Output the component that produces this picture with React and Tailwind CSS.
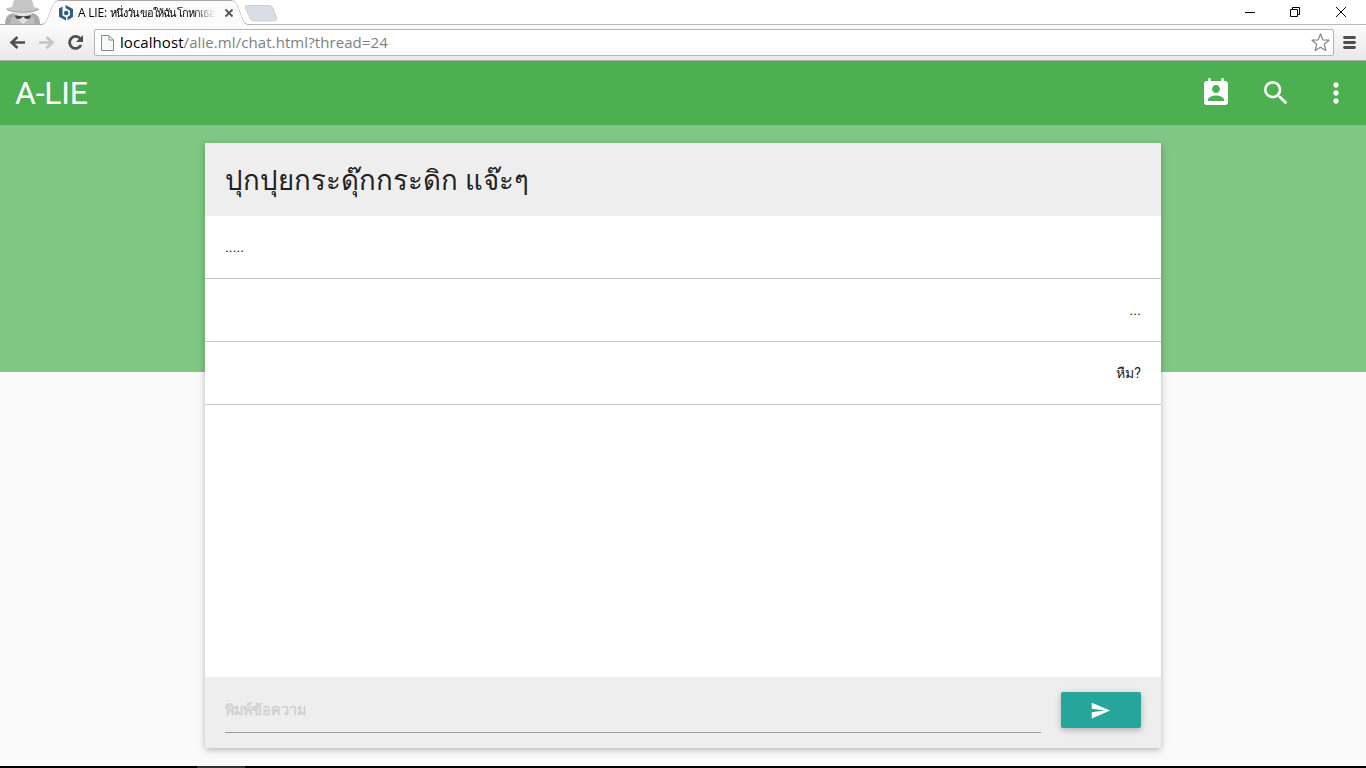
import { MdPermContactCalendar, MdSearch, MdMoreVert, MdSend } from "react-icons/md";

function TabStrip() {
  return (
    <div className="relative flex h-6 shrink-0 bg-white">
      <svg className="absolute left-0 top-0" width="290" height="25" viewBox="0 0 290 25">
        <g>
          <path d="M5 24C5 17 8 14 14 13H32C37 14 40 17 40 24Z" fill="#a9a9a9" />
          <path d="M14 11H32L31 19L23 24L15 19Z" fill="#e2e2e2" />
          <path d="M12 17L16 16L22 24H10ZM34 17L30 16L24 24H35Z" fill="#bdbdbd" />
          <path d="M14 0H32L34 7L39 8.500C39 11 31 12.500 23 12.500C14 12.500 6 11 6 8.500L12 7Z" fill="#c6c6c6" />
          <path d="M7 9.500C14 13 31 13 39 9.500" fill="none" stroke="#a5a5a5" />
          <path d="M15 15Q23 17.500 31 15Q31 19 27 19Q24.500 18.800 24 17H22.500Q21.500 19 18.500 19Q15 18.800 15 15Z" fill="#444" />
        </g>
        <path d="M0 24.500H40C46 24 46 22 48 18L53 5Q55 .5 59 .5H231Q235 .5 237 5L242 18C244 23 245 24 250 25H0Z" fill="none" stroke="#a8a8a8" />
        <path d="M42 25C46 24 46 22 48 18L53 5Q55 1 59 1H231Q235 1 237 5L242 18C244 23 245 24 248 25Z" fill="#fbfbfb" />
        <path d="M246.500 5.500H269Q272 5.500 273 8L276.500 18Q277.500 21 274 21H254Q251 21 250 18L245.500 8Q244.500 5.500 246.500 5.500Z" fill="#d8dee6" stroke="#ccd0d6" />
        <path d="M59 8.500L62.500 6.500V15.500L66 17.500V20.500L59 16.700ZM65.500 5L73 9V17L67.500 20.200V17L70 15.300V10.700L65.500 8Z" fill="#2f5d84" />
        <circle cx="66.200" cy="13" r="2.300" fill="#2f5d84" />
        <path d="M225.500 9.500L232.500 16.500M232.500 9.500L225.500 16.500" stroke="#555" strokeWidth="1.800" />
      </svg>
      <div className="relative ml-[78px] mt-[4px] h-[20px] w-[140px] whitespace-nowrap bg-linear-to-r from-black from-82% to-transparent to-98% bg-clip-text font-['Open_Sans','Noto_Sans',sans-serif] text-[12px] leading-[18px] text-transparent">
        <span className="tracking-[-0.2px]">A LIE: </span>
        <span className="text-[11px] tracking-[-0.85px]">หนึ่งวันขอให้ฉันโกหกเธอ</span>
      </div>
      <svg className="ml-auto shrink-0" width="130" height="24" viewBox="1236 0 130 24" fill="none" stroke="#000">
        <path d="M1245 12.500H1255M1290.500 9.500H1297.500V16.500H1290.500ZM1292.500 9V7.500H1299.500V14.500H1298M1336 7L1346 17M1346 7L1336 17" />
      </svg>
    </div>
  );
}

function Toolbar() {
  return (
    <div className="flex h-[37px] shrink-0 items-center border-t border-b border-t-[#b8b8b8] border-b-[#b0b0b0] bg-linear-to-b from-[#fbfbfb] to-[#e9e9e9]">
      <svg width="94" height="35" viewBox="0 25 94 35" fill="none" strokeWidth="2.600">
        <path d="M25 42.500H12M17.500 37L11.500 42.500L17.500 48" stroke="#505050" />
        <path d="M39 42.500H52M46.500 37L52.500 42.500L46.500 48" stroke="#c4c4c4" />
        <path d="M80.500 39A6 6 0 1 0 81 45" stroke="#505050" strokeWidth="2.800" />
        <path d="M83 35V42H76Z" fill="#505050" />
      </svg>
      <div className="flex h-[27px] w-[1240px] items-center rounded-[2px] border border-[#b4b4b4] bg-white">
        <svg className="ml-[6px] shrink-0" width="13" height="16" viewBox="0 0 13 16" fill="#f8f8f8" stroke="#888">
          <path d="M.5 .5H8L12.500 5V15.500H.5ZM8 .5V5H12.500" />
        </svg>
        <div className="mb-[2px] ml-[6px] grow font-['Open_Sans',sans-serif] text-[15px] leading-[24px] tracking-[0.08px] text-[#808080]">
          <span className="text-black">localhost</span>/alie.ml/chat.html?thread=24
        </div>
        <svg className="mr-[3px] shrink-0" width="19" height="19" viewBox="0 0 19 19" fill="none" stroke="#858585" strokeWidth="1.200" strokeLinejoin="round">
          <path d="M9.500 1L11.800 6.800L18 7.200L13.300 11.200L14.800 17.500L9.500 14.200L4.200 17.500L5.700 11.200L1 7.200L7.200 6.800Z" />
        </svg>
      </div>
      <svg className="ml-[9px]" width="13" height="13" viewBox="0 0 13 13" stroke="#4e4e4e" strokeWidth="2.800" strokeLinecap="round">
        <path d="M1.500 1.500H11.500M1.500 6.500H11.500M1.500 11.500H11.500" />
      </svg>
    </div>
  );
}

function Message({ text, right }) {
  return (
    <div className={`flex h-[63px] items-center border-b border-[#c6c6c6] px-5 text-[14px] leading-[22px] tracking-[0.15px] text-[#222] ${right ? "justify-end" : ""}`}>
      {text}
    </div>
  );
}

export default function App() {
  return (
    <div className="flex h-[768px] w-[1366px] flex-col overflow-hidden bg-[#fafafa] font-['Roboto','Noto_Sans',sans-serif]">
      <TabStrip />
      <Toolbar />
      <header className="flex h-16 shrink-0 items-center bg-[#4caf50] pl-[15px] pr-[14px] text-white">
        <h1 className="grow text-[32px] leading-[64px] tracking-[-0.2px]">A-LIE</h1>
        <nav className="flex gap-7">
          <MdPermContactCalendar size={32} />
          <MdSearch size={32} />
          <MdMoreVert size={32} />
        </nav>
      </header>
      <main className="flex h-[641px] shrink-0 justify-center bg-linear-to-b from-[#81c784] from-[247px] to-[#fafafa] to-[247px] pt-[18px]">
        <section className="flex h-[605px] w-[956px] flex-col bg-white shadow-[0_2px_5px_0_rgba(0,0,0,0.16),0_2px_10px_0_rgba(0,0,0,0.12)]">
          <div className="flex h-[73px] shrink-0 items-center bg-[#eee] px-5 pt-[2px]">
            <h2 className="text-[27.6px] leading-[40px] text-[#222]">ปุกปุยกระดุ๊กกระดิก แจ๊ะๆ</h2>
          </div>
          <div className="grow">
            <Message text="....." />
            <Message text="..." right />
            <Message text="หืม?" right />
          </div>
          <div className="flex h-[71px] shrink-0 gap-5 bg-[#eee] px-5">
            <div className="flex h-14 w-[816px] items-center border-b border-[#9e9e9e] pt-[12px] text-[14.4px] font-bold text-[#d1d1d1]">พิมพ์ข้อความ</div>
            <button className="mt-[15px] flex h-9 w-20 items-center justify-center rounded-[2px] bg-[#26a69a] text-white shadow-[0_2px_5px_0_rgba(0,0,0,0.16),0_2px_10px_0_rgba(0,0,0,0.12)]">
              <MdSend size={21} className="mr-px" />
            </button>
          </div>
        </section>
      </main>
      <div className="h-[2px] shrink-0 bg-black pl-[197px]">
        <div className="h-[2px] w-12 bg-[#333]" />
      </div>
    </div>
  );
}
